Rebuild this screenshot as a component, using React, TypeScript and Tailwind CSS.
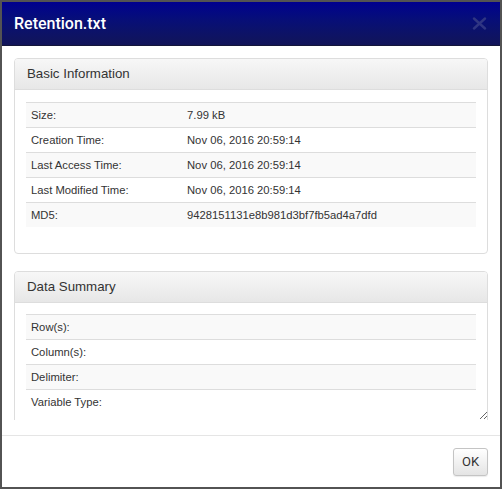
import React from "react";

const basic: [string, string][] = [
  ["Size:", "7.99 kB"],
  ["Creation Time:", "Nov 06, 2016 20:59:14"],
  ["Last Access Time:", "Nov 06, 2016 20:59:14"],
  ["Last Modified Time:", "Nov 06, 2016 20:59:14"],
  ["MD5:", "9428151131e8b981d3bf7fb5ad4a7dfd"],
];

const summary: [string, string][] = [
  ["Row(s):", ""],
  ["Column(s):", ""],
  ["Delimiter:", ""],
  ["Variable Type:", ""],
];

function Rows({ rows }: { rows: [string, string][] }) {
  return (
    <div className="mx-[11px] flex flex-col">
      {rows.map(([k, v], i) => (
        <div
          key={k}
          className={`flex h-[25px] items-center border-t border-[#dddddd] text-[11.25px] text-[#333333] ${
            i % 2 === 0 ? "bg-[#f9f9f9]" : "bg-white"
          }`}
        >
          <div className="w-[161px] shrink-0 pl-[5px]">{k}</div>
          <div>{v}</div>
        </div>
      ))}
    </div>
  );
}

function Panel({
  title,
  rows,
  bodyClass,
}: {
  title: string;
  rows: [string, string][];
  bodyClass: string;
}) {
  return (
    <div className="shrink-0 rounded-[4px] border border-[#dddddd] bg-white">
      <div className="flex h-[31px] items-center rounded-t-[3px] border-b border-[#dddddd] bg-gradient-to-b from-[#f7f7f7] to-[#e7e7e7] pl-[12px] text-[13.3px] text-[#333333]">
        {title}
      </div>
      <div className={bodyClass}>
        <Rows rows={rows} />
      </div>
    </div>
  );
}

export default function App() {
  return (
    <div
      className="flex h-[489px] w-[502px] flex-col border-2 border-[#535353] bg-white"
      style={{ fontFamily: '"Liberation Sans", Arial, sans-serif' }}
    >
      <div className="flex h-[44px] shrink-0 items-center justify-between border-b border-[#14163a] bg-gradient-to-b from-[#00008f] to-[#111458] pl-[12px] pr-[13px]">
        <span
          className="text-[16px] font-medium text-white"
          style={{ fontFamily: "Roboto, sans-serif" }}
        >
          Retention.txt
        </span>
        <svg width="15" height="13" viewBox="0 0 15 13">
          <path
            d="M2 1.5 L13 11.5 M13 1.5 L2 11.5"
            stroke="#2f3583"
            strokeWidth="2.4"
            strokeLinecap="round"
          />
        </svg>
      </div>
      <div className="flex flex-1 flex-col px-[12px] pb-[15px] pt-[12px]">
        <div className="flex h-[362px] resize-y flex-col overflow-hidden">
          <Panel title="Basic Information" rows={basic} bodyClass="pb-[26px] pt-[12px]" />
          <div className="h-[17px] shrink-0" />
          <Panel title="Data Summary" rows={summary} bodyClass="pb-[26px] pt-[11px]" />
        </div>
      </div>
      <div className="flex h-[52px] shrink-0 items-center justify-end border-t border-[#e5e5e5] pr-[12px]">
        <button
          className="flex h-[28px] w-[35px] items-center justify-center rounded-[3px] border border-[#c4c4c4] bg-gradient-to-b from-white to-[#e4e4e4] text-[13px] text-[#333333] shadow-[0_1px_1px_rgba(0,0,0,0.08)]"
          style={{ fontFamily: "Roboto, sans-serif" }}
        >
          OK
        </button>
      </div>
    </div>
  );
}
